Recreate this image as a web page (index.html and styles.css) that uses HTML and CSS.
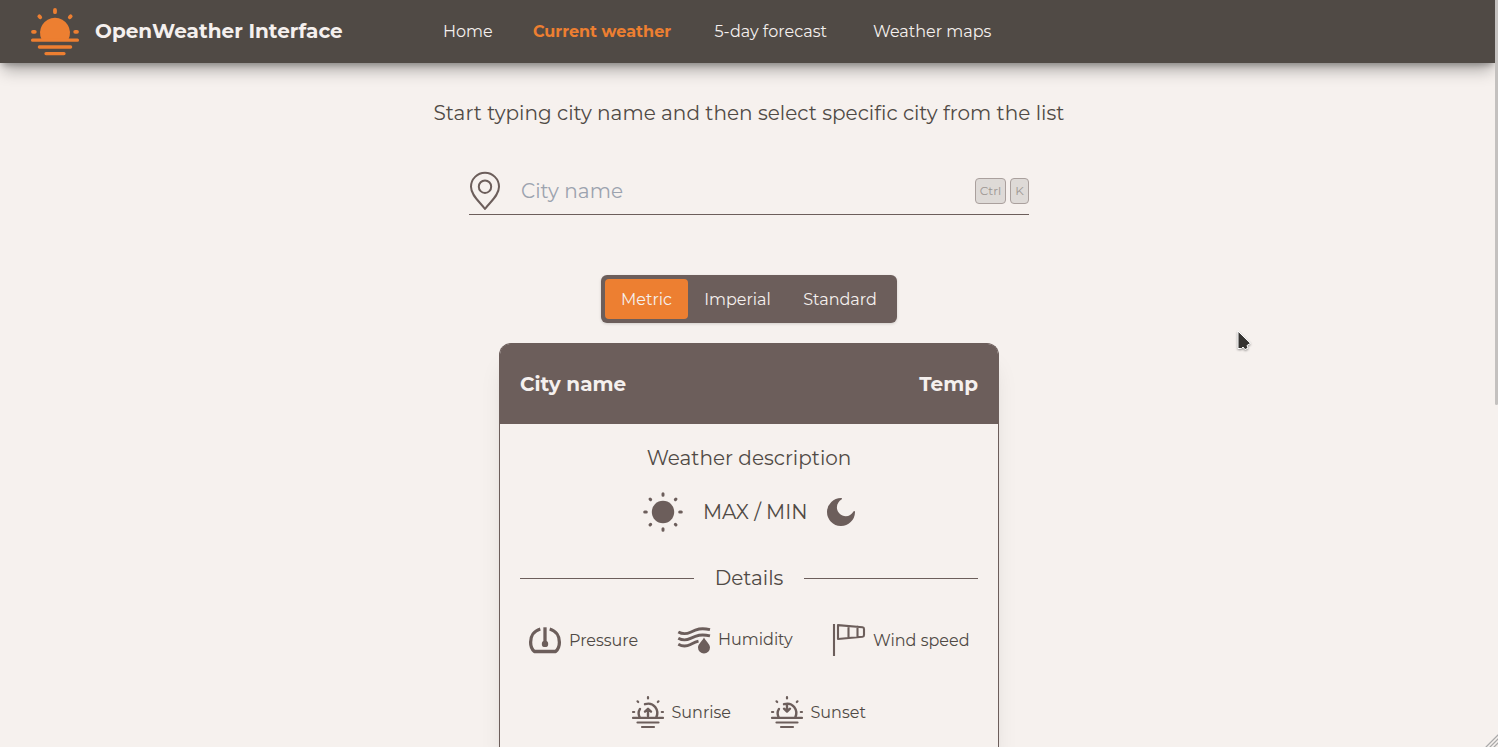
FILE: index.html
```html
<!DOCTYPE html>
<html lang="en">
<head>
<meta charset="utf-8">
<title>OpenWeather Interface</title>
<link rel="stylesheet" href="styles.css">
</head>
<body>
<header class="header">
  <a class="brand">
    <svg class="brand-logo" viewBox="0 0 48 48"><path d="M10.600 31.500A15 15 0 1 1 37.400 31.500Z" fill="currentColor" stroke="none"/><path d="M1.600 32.200h44.800M8.400 39h31.200M15 45.600h18" stroke-width="3.300"/><path d="M24 2v2.200M8.300 8.300l.9 1M39.700 8.300l-.9 1M2 23.800h1.800M44.200 23.800H46" stroke-width="3.800"/></svg>
    <span class="brand-name">OpenWeather Interface</span>
  </a>
  <nav class="nav">
    <a class="nav-link home">Home</a>
    <a class="nav-link current">Current weather</a>
    <a class="nav-link forecast">5-day forecast</a>
    <a class="nav-link maps">Weather maps</a>
  </nav>
</header>
<main class="main">
  <p class="hint">Start typing city name and then select specific city from the list</p>
  <div class="search">
    <svg class="pin" viewBox="0 0 32 40"><path d="M16 38C11 31 2 24.500 2 15.800a14 14 0 0 1 28 0C30 24.500 21 31 16 38Z"/><circle cx="16" cy="15.700" r="6.200"/></svg>
    <span class="placeholder">City name</span>
    <kbd class="key ctrl">Ctrl</kbd><kbd class="key">K</kbd>
  </div>
  <div class="units">
    <button class="unit metric">Metric</button>
    <button class="unit imperial">Imperial</button>
    <button class="unit standard">Standard</button>
  </div>
  <section class="card">
    <div class="card-head"><h2 class="city">City name</h2><h2 class="temp">Temp</h2></div>
    <div class="card-body">
      <p class="description">Weather description</p>
      <div class="range">
        <svg class="sun" viewBox="0 0 40 40"><circle cx="20" cy="20" r="11.200" fill="currentColor" stroke="none"/><path d="M20 1.700v1.600M20 36.700v1.600M1.700 20h1.600M36.700 20h1.600M7.100 7.100l.5.5M32.400 32.400l.5.5M7.100 32.900l.5-.5M32.400 7.600l.5-.5" stroke-width="3"/></svg>
        <span class="range-text">MAX / MIN</span>
        <svg class="moon" viewBox="0 0 28 28"><path d="M14.300 0A14 14 0 1 0 28 14.300C28.100 13 27.200 12.700 26.500 13.500C24.500 16.500 22 18.200 18.800 18.200C13.800 18.200 9.900 14.200 9.900 9.200C9.900 5.800 12 3 14.500 1.500C15.300.800 15.100 0 14.300 0Z" fill="currentColor" stroke="none"/></svg>
      </div>
      <div class="divider"><span class="divider-text">Details</span></div>
      <div class="details">
        <div class="detail"><svg class="icon" viewBox="0 0 32 32"><path d="M11.300 5C5 6.800 1.600 12 1.600 18.200c0 4 1.200 7.100 3.800 9.300h21.200c2.600-2.200 3.800-5.300 3.800-9.300 0-6.200-3.400-11.400-9.700-13.200" stroke-width="3.300" stroke-linecap="butt"/><path d="M16 3.300V20" stroke-width="3.300" stroke-linecap="butt"/><circle cx="16" cy="19.900" r="3.200" fill="currentColor" stroke="none"/></svg><span class="pressure">Pressure</span></div>
        <div class="detail raised"><svg class="icon" viewBox="0 0 32 32"><g stroke-width="2.900" stroke-linecap="butt"><path d="M.300 8c4 2.200 8 2.200 12.200.2C18.500 5.300 23 3.500 32 5.700"/><path d="M.300 14.200c4 2.200 8 2.200 12.200.2C18.500 11.500 23 9.700 32 11.900"/><path d="M.300 20.300c4 2.200 8.200 2.200 12.200.2 3-1.500 5-2.600 8-3.300"/></g><path d="M26 13.600c-2.100 3.800-6 6.800-6 10a6 6 0 0 0 12 0c0-3.200-3.900-6.200-6-10Z" fill="currentColor" stroke="none"/></svg><span class="humidity">Humidity</span></div>
        <div class="detail"><svg class="icon" viewBox="0 0 32 32"><path d="M1 0v32" stroke-width="2.100" stroke-linecap="butt"/><path d="M5 1.100 29.500 3.200Q31 3.400 31 5v6q0 1.500-1.500 1.700L5 15ZM15.500 2v12M24.500 2.800v10.400" stroke-width="2.100"/></svg><span class="wind">Wind speed</span></div>
      </div>
      <div class="details second">
        <div class="detail"><svg class="icon" viewBox="0 0 32 32"><path d="M1 21.900h30M5.500 26.500h21M10 31h12" stroke-width="2.200"/><path d="M16 1v1.500M5.500 5.300l.7.700M26.500 5.300l-.7.700M1 16h1.200M29.800 16H31" stroke-width="2.200"/><path d="M7.700 21.500c-1.500-3-1.400-6 .3-8.600M13 8.200c8.800-2.700 14.600 5.800 11.300 13.300M16 20v-6.700M13 15.600l3-2.800 3 2.800" stroke-width="2.400"/></svg><span class="sunrise">Sunrise</span></div>
        <div class="detail"><svg class="icon" viewBox="0 0 32 32"><path d="M1 21.900h30M5.500 26.500h21M10 31h12" stroke-width="2.200"/><path d="M16 1v1.500M5.500 5.300l.7.700M26.500 5.300l-.7.700M1 16h1.200M29.800 16H31" stroke-width="2.200"/><path d="M7.700 21.500c-1.500-3-1.400-6 .3-8.600M13 8.200c8.800-2.700 14.600 5.800 11.300 13.300M16 8.200v6.700M13 12.700l3 2.800 3-2.800" stroke-width="2.400"/></svg><span class="sunset">Sunset</span></div>
      </div>
    </div>
  </section>
</main>
<div class="scroll-thumb"></div>
<svg class="cursor" viewBox="0 0 16 22"><path d="M2 1.500v17h3.500l1.500-1.500 2 2.600 3-1.500-1-2.600 3.200-2Z"/></svg>
<svg class="grip" viewBox="0 0 12 12"><path d="M0 12 12 0M4 12l8-8M8 12l4-4"/></svg>
</body>
</html>
```
FILE: styles.css
```css
* { box-sizing: border-box; }
html, body { height: 100%; overflow: hidden; }
body { margin: 0; background: #f6f1ee; color: #504a45; font: 16px/24px Montserrat, Inter, sans-serif; }
p, h2 { margin: 0; }
svg { display: block; flex: none; fill: none; stroke: currentColor; stroke-linecap: round; stroke-linejoin: round; color: #6c5e5b; overflow: visible; }
span, a, p, h2, button, kbd { white-space: nowrap; }
.header { display: flex; align-items: center; width: 1495px; height: 63px; background: #504a45; color: #f5f0ee; box-shadow: 0 10px 15px -3px rgba(0,0,0,.3), 0 4px 6px -2px rgba(0,0,0,.25); }
.brand { display: flex; align-items: center; gap: 16px; width: 443px; padding-left: 31px; }
.brand-logo { width: 48px; height: 48px; color: #ed7f31; }
.brand-name { padding-bottom: 1px; font-size: 20px; line-height: 28px; font-weight: 700; }
.nav { display: flex; }
.home { width: 90px; }
.current { width: 181.500px; color: #ed7f31; font-weight: 700; }
.forecast { width: 158.500px; letter-spacing: .03px; }
.main { display: flex; flex-direction: column; align-items: center; width: 1498px; padding-top: 36px; }
.hint { font-size: 20px; line-height: 28px; letter-spacing: .03px; }
.search { display: flex; align-items: center; width: 560px; height: 48px; margin-top: 40px; border-bottom: 1px solid #6c5e5b; }
.pin { width: 32px; height: 40px; stroke-width: 2; }
.placeholder { flex: 1; padding-left: 20px; color: #9ca3af; font-size: 20px; letter-spacing: .08px; }
.key { display: flex; align-items: center; justify-content: center; width: 19px; height: 26px; margin-left: 4px; border: 1px solid #aaa09d; border-radius: 4px; background: #dedad7; color: #9c9692; font: 12px/16px Montserrat, Inter, sans-serif; }
.ctrl { width: 31px; }
.units { display: flex; width: 296px; height: 48px; margin-top: 60px; padding: 4px; border-radius: 6px; background: #6c5e5b; box-shadow: 0 1px 3px rgba(0,0,0,.15); }
.unit { height: 40px; padding: 1px 0 0; border: 0; border-radius: 4px; background: none; color: #f5f0ee; font: 16px/24px Montserrat, Inter, sans-serif; }
.metric { width: 83px; background: #ed7f31; }
.imperial { width: 99px; }
.standard { width: 106px; }
.card { width: 500px; height: 404px; margin-top: 20px; border: 1px solid #6c5e5b; border-bottom: 0; border-radius: 12px 12px 0 0; box-shadow: 0 20px 25px -5px rgba(0,0,0,.1), 0 8px 10px -6px rgba(0,0,0,.1); }
.card-head { display: flex; align-items: center; justify-content: space-between; height: 80px; padding: 0 20px; border-radius: 10px 10px 0 0; background: #6c5e5b; color: #f5f0ee; }
.city, .temp { font-size: 20px; line-height: 28px; font-weight: 700; }
.card-body { padding: 20px 20px 0; }
.description, .divider-text, .range-text { font-size: 20px; line-height: 28px; }
.description { text-align: center; }
.range { display: flex; align-items: center; justify-content: center; gap: 20px; margin-top: 20px; }
.sun { width: 40px; height: 40px; }
.range-text { width: 104px; }
.moon { width: 28px; height: 28px; }
.divider { display: flex; align-items: center; gap: 20px; margin-top: 32px; }
.divider::before, .divider::after { content: ""; flex: 1; height: 1px; background: #6c5e5b; }
.divider-text { width: 70px; text-align: center; }
.details { display: flex; justify-content: center; gap: 40px; margin-top: 32px; }
.second { margin-top: 40px; }
.detail { display: flex; align-items: center; gap: 8px; }
.detail span { padding-top: 2px; }
.raised span { padding-top: 0; }
.icon { width: 32px; height: 32px; }
.pressure { width: 69px; }
.humidity { width: 75px; }
.wind { width: 96px; }
.sunrise { width: 59px; }
.sunset { width: 56px; }
.scroll-thumb { position: absolute; right: 0; top: 0; width: 3px; height: 405px; background: #c4c1bf; border-radius: 0 0 2px 2px; }
.cursor { position: absolute; left: 1235.500px; top: 330px; width: 16px; height: 22px; color: #fff; fill: #353331; stroke-width: 1; filter: drop-shadow(0 1px 1px rgba(0,0,0,.4)); }
.grip { position: absolute; right: 0; bottom: 0; width: 12px; height: 12px; color: #aaa; stroke-width: 1.200; }
```
